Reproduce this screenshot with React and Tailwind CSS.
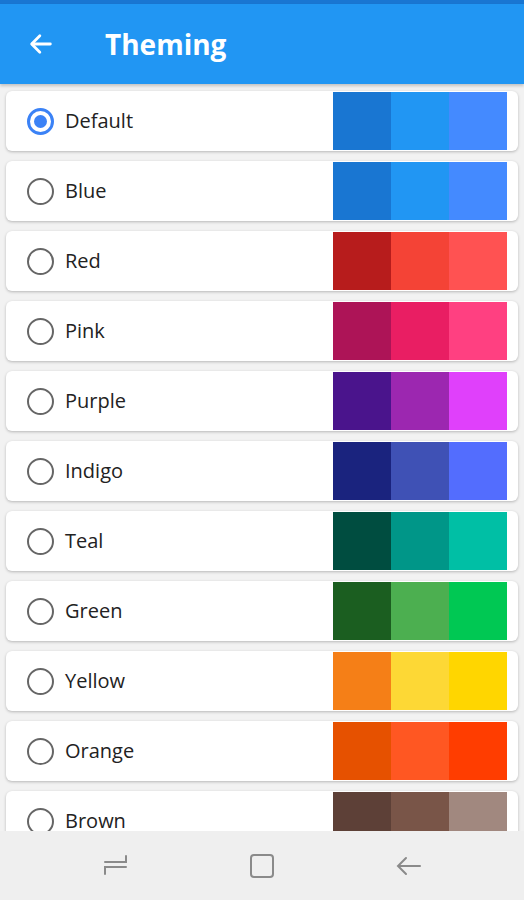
import React, { useState } from "react";

const themes = [
  { name: "Default", colors: ["#1976D2", "#2196F3", "#448AFF"] },
  { name: "Blue", colors: ["#1976D2", "#2196F3", "#448AFF"] },
  { name: "Red", colors: ["#B71C1C", "#F44336", "#FF5252"] },
  { name: "Pink", colors: ["#AD1457", "#E91E63", "#FF4081"] },
  { name: "Purple", colors: ["#4A148C", "#9C27B0", "#E040FB"] },
  { name: "Indigo", colors: ["#1A237E", "#3F51B5", "#536DFE"] },
  { name: "Teal", colors: ["#004D40", "#009688", "#00BFA5"] },
  { name: "Green", colors: ["#1B5E20", "#4CAF50", "#00C853"] },
  { name: "Yellow", colors: ["#F57F17", "#FDD835", "#FFD600"] },
  { name: "Orange", colors: ["#E65100", "#FF5722", "#FF3D00"] },
  { name: "Brown", colors: ["#5D4037", "#795548", "#A1887F"] },
];

function Radio({ checked }) {
  if (checked) {
    return (
      <div className="w-[27px] h-[27px] rounded-full border-[3px] border-[#3b82f6] flex items-center justify-center shrink-0">
        <div className="w-[13px] h-[13px] rounded-full bg-[#3b82f6]" />
      </div>
    );
  }
  return <div className="w-[27px] h-[27px] rounded-full border-[2.5px] border-[#666] shrink-0" />;
}

function ThemeRow({ theme, checked, onSelect }) {
  return (
    <div
      onClick={onSelect}
      className="h-[60px] shrink-0 bg-white rounded-[6px] shadow-[0_1px_3px_rgba(0,0,0,0.25)] flex items-center pl-[21px]"
    >
      <Radio checked={checked} />
      <span className="ml-[11px] text-[20px] text-[#222]">{theme.name}</span>
      <div className="ml-auto mr-[11px] flex h-[58px]">
        {theme.colors.map((c, i) => (
          <div key={i} className="w-[58px] h-full" style={{ backgroundColor: c }} />
        ))}
      </div>
    </div>
  );
}

export default function App() {
  const [selected, setSelected] = useState("Default");

  return (
    <div
      className="w-[524px] h-[900px] flex flex-col bg-[#f2f2f2] overflow-hidden"
      style={{ fontFamily: '"Open Sans", "Noto Sans", sans-serif' }}
    >
      {/* status bar */}
      <div className="h-[4px] bg-[#1976D2] shrink-0" />

      {/* app bar */}
      <div className="h-[80px] bg-[#2196F3] flex items-center shrink-0 shadow-[0_2px_3px_rgba(0,0,0,0.2)] z-10">
        <svg width="28" height="28" viewBox="0 0 24 24" className="ml-[27px]" fill="none" stroke="white" strokeWidth="2.4" strokeLinecap="round" strokeLinejoin="round">
          <path d="M20 12H4.5" />
          <path d="M11 5l-7 7 7 7" />
        </svg>
        <h1 className="ml-[50px] text-[28px] font-bold text-white">Theming</h1>
      </div>

      {/* list */}
      <div className="flex-1 overflow-hidden px-[6px] pt-[7px] flex flex-col gap-[10px]">
        {themes.map((t) => (
          <ThemeRow key={t.name} theme={t} checked={selected === t.name} onSelect={() => setSelected(t.name)} />
        ))}
      </div>

      {/* nav bar */}
      <div className="h-[69px] bg-[#efefef] shrink-0 flex items-center justify-between px-[101px]">
        <svg width="28" height="28" viewBox="0 0 28 28" fill="none" stroke="#8a8a8a" strokeWidth="2" strokeLinecap="round">
          <path d="M25 4v6H4" />
          <path d="M25 15H4v7" />
        </svg>
        <svg width="28" height="28" viewBox="0 0 28 28" fill="none" stroke="#8a8a8a" strokeWidth="2">
          <rect x="3" y="3" width="22" height="22" rx="3" />
        </svg>
        <svg width="28" height="28" viewBox="0 0 28 28" fill="none" stroke="#8a8a8a" strokeWidth="2" strokeLinecap="round">
          <path d="M25 14H4" />
          <path d="M11 6l-8 8 8 8" />
        </svg>
      </div>
    </div>
  );
}
